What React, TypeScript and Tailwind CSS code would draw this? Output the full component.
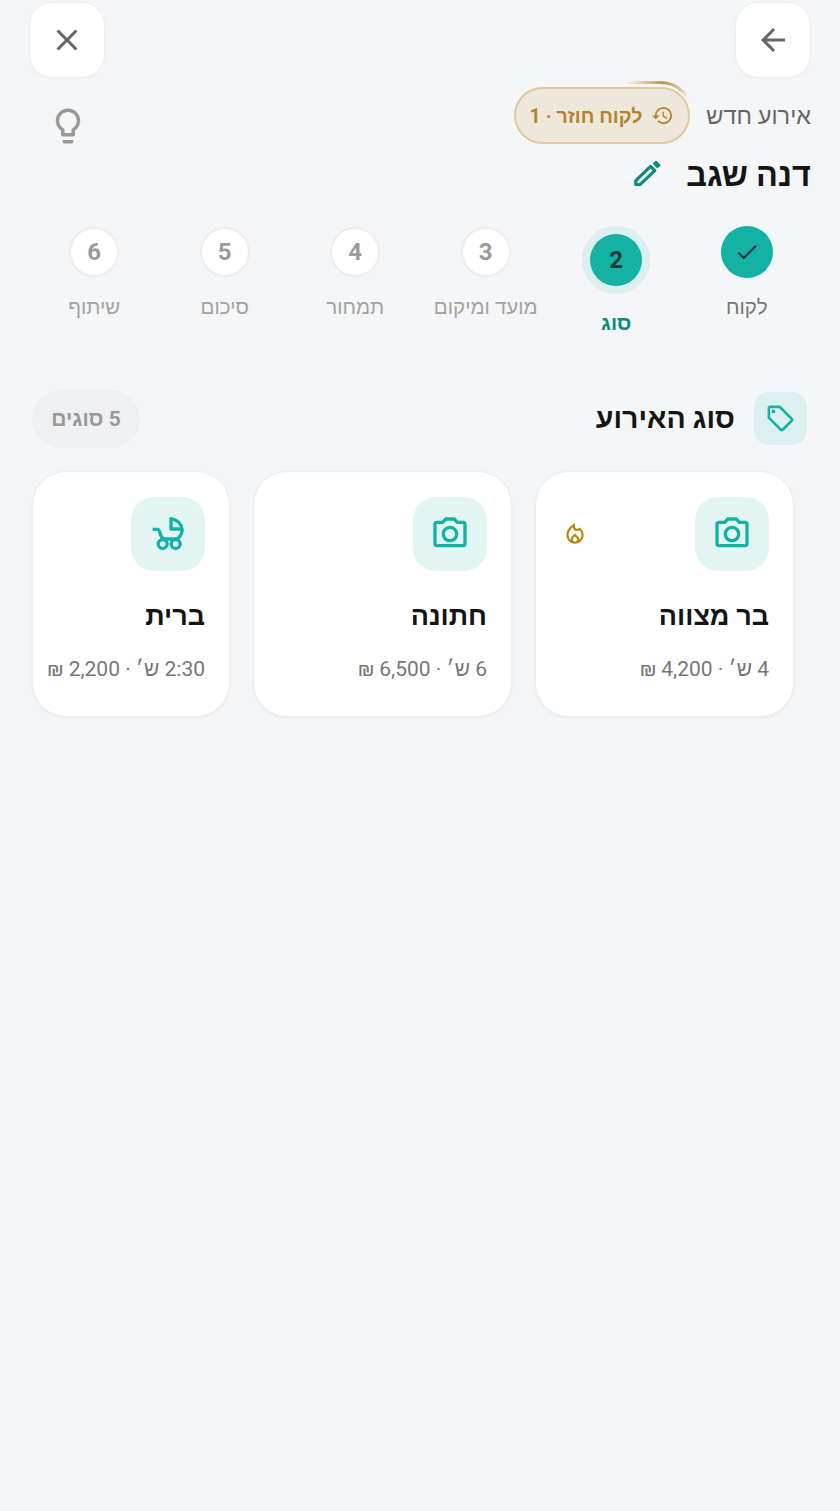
import React from "react";
import {
  MdArrowBack, MdClose, MdOutlineLightbulb, MdCheck, MdHistory,
  MdOutlineLocalOffer, MdOutlinePhotoCamera, MdOutlineLocalFireDepartment,
} from "react-icons/md";

const FONT = { fontFamily: 'Roboto, "Noto Sans", "Liberation Sans", sans-serif' };

function TopButton({ children }: { children: React.ReactNode }) {
  return (
    <button className="w-[76px] h-[76px] rounded-[23px] bg-white border border-[#eceef0] shadow-[0_1px_2px_rgba(0,0,0,0.03)] flex items-center justify-center text-[#666666]">
      {children}
    </button>
  );
}

function Stroller() {
  return (
    <svg width="40" height="40" viewBox="0 0 24 24" fill="none" stroke="currentColor" strokeWidth="2" strokeLinejoin="round" strokeLinecap="butt">
      <path d="M13.8 2.8 V9 H20.4 C20.2 6 17.6 3.4 13.8 2.8 Z" />
      <path d="M2.8 9.2 H5.6 C6.4 9.2 6.8 9.9 7 10.8 C7.5 13.2 8.4 14.4 9.6 15.2 M20.6 9.2 C20.4 11.4 19.4 13.6 17.4 15.2 M9 15 H17.8" />
      <circle cx="8.8" cy="18" r="2.7" />
      <circle cx="16.6" cy="18" r="2.7" />
    </svg>
  );
}

function Pencil() {
  return (
    <svg width="30" height="30" viewBox="0 0 30 30" fill="none" className="text-[#0f8a7e]">
      <path d="M3.8 24.4 V20.6 L18.6 6.4 L22.8 10.6 L8 24.6 Z" stroke="currentColor" strokeWidth="3.2" strokeLinejoin="round" />
      <path d="M21.2 3.6 L24 1 L28.4 5.2 L25.4 8 Z" fill="currentColor" stroke="currentColor" strokeWidth="1" strokeLinejoin="round" />
    </svg>
  );
}

const steps = [
  { n: 1, label: "לקוח", state: "done" },
  { n: 2, label: "סוג", state: "active" },
  { n: 3, label: "מועד ומיקום", state: "todo" },
  { n: 4, label: "תמחור", state: "todo" },
  { n: 5, label: "סיכום", state: "todo" },
  { n: 6, label: "שיתוף", state: "todo" },
];

function Step({ n, label, state }: { n: number; label: string; state: string }) {
  return (
    <div className="flex-1 flex flex-col items-center">
      {state === "done" && (
        <div className="w-[52px] h-[52px] rounded-full bg-[#14b2a4] flex items-center justify-center text-[#17393a]">
          <MdCheck size={26} />
        </div>
      )}
      {state === "active" && (
        <div className="w-[68px] h-[68px] rounded-full bg-[#dcf0ef] flex items-center justify-center">
          <div className="w-[52px] h-[52px] rounded-full bg-[#14b2a4] flex items-center justify-center text-[24px] font-bold text-[#12383a]">
            {n}
          </div>
        </div>
      )}
      {state === "todo" && (
        <div className="w-[50px] h-[50px] mt-[1px] rounded-full bg-white border-2 border-[#eeeeee] flex items-center justify-center text-[24px] font-bold text-[#9b9b9b]">
          {n}
        </div>
      )}
      <div
        className={
          state === "active"
            ? "mt-[15px] h-[28px] leading-[28px] text-[20.5px] font-bold text-[#0f8a7e] whitespace-nowrap"
            : state === "done"
              ? "mt-[15px] h-[28px] leading-[28px] text-[20.5px] text-[#777777] whitespace-nowrap"
              : "mt-[16px] h-[28px] leading-[28px] text-[20.5px] text-[#a3a3a3] whitespace-nowrap"
        }
      >
        {label}
      </div>
    </div>
  );
}

function Card({ w, icon, name, sub, fire, pl }: { w: string; icon: React.ReactNode; name: string; sub: string; fire?: boolean; pl: string }) {
  return (
    <div className={`${w} ${pl} h-[246px] shrink-0 rounded-[34px] bg-white border border-[#eceef0] shadow-[0_1px_3px_rgba(0,0,0,0.05)] pt-[25px] pr-[24px]`}>
      <div className="flex items-center justify-between h-[74px]">
        <div className="w-[74px] h-[74px] rounded-[23px] bg-[#e2f5f3] flex items-center justify-center text-[#14b2a4]">
          {icon}
        </div>
        {fire && <MdOutlineLocalFireDepartment size={26} className="text-[#b8860b] ml-[2px]" />}
      </div>
      <div className="mt-[27px] h-[36px] leading-[36px] text-[27px] font-bold text-[#151515] whitespace-nowrap">{name}</div>
      <div className="mt-[20px] h-[30px] leading-[30px] text-[21px] text-[#777777] whitespace-nowrap">{sub}</div>
    </div>
  );
}

function Camera() {
  return <MdOutlinePhotoCamera size={40} />;
}

export default function App() {
  return (
    <div dir="rtl" style={FONT} className="w-[840px] h-[1511px] bg-[#f4f6f8] overflow-hidden">
      <div className="flex justify-between pt-[2px] pr-[29px] pl-[29px]">
        <TopButton><MdArrowBack size={36} /></TopButton>
        <TopButton><MdClose size={36} /></TopButton>
      </div>

      <div className="flex items-center justify-between mt-[9px] pr-[29px] pl-[47px] h-[57px]">
        <div className="flex items-center gap-[16px]">
          <span className="w-[105px] text-[23.5px] font-medium text-[#666666] whitespace-nowrap pt-[2px]">אירוע חדש</span>
          <div className="relative">
            <div className="w-[176px] h-[57px] rounded-full bg-[#eee8dc] border-2 border-[#e0c99f] flex items-center justify-center gap-[9px] text-[#b4842c]">
              <MdHistory size={23} />
              <span className="text-[19.5px] font-bold whitespace-nowrap pt-[2px]">לקוח חוזר · 1</span>
            </div>
            <svg className="absolute -top-[7px] right-[-5px]" width="72" height="38" viewBox="0 0 72 38" fill="none">
              <defs>
                <linearGradient id="shine" x1="0" y1="0" x2="1" y2="0.5">
                  <stop offset="0" stopColor="#c9a45f" stopOpacity="0" />
                  <stop offset="0.45" stopColor="#b98c3c" stopOpacity="0.95" />
                  <stop offset="0.8" stopColor="#d9c49a" stopOpacity="0.7" />
                  <stop offset="1" stopColor="#ffffff" stopOpacity="0" />
                </linearGradient>
              </defs>
              <path d="M2 2.5 H37 A33 33 0 0 1 70 36" stroke="url(#shine)" strokeWidth="3" strokeLinecap="round" />
            </svg>
          </div>
        </div>
        <MdOutlineLightbulb size={42} className="text-[#999999] mt-[20px]" />
      </div>

      <div className="flex items-center gap-[24px] pr-[29px] mt-[7px] h-[48px]">
        <span className="text-[32.5px] font-bold text-[#151515] whitespace-nowrap pt-[1px]">דנה שגב</span>
        <Pencil />
      </div>

      <div className="flex items-start pr-[28px] pl-[29px] mt-[27px] h-[110px]">
        {steps.map((s) => <Step key={s.n} {...s} />)}
      </div>

      <div className="flex items-center justify-between mt-[54px] pr-[33px] pl-[32px]">
        <div className="flex items-center gap-[19px]">
          <div className="w-[53px] h-[53px] mb-[1px] rounded-[15px] bg-[#dcf0ef] flex items-center justify-center text-[#14b2a4]">
            <MdOutlineLocalOffer size={31} />
          </div>
          <span className="text-[28.5px] font-bold text-[#151515] whitespace-nowrap pt-[1px]">סוג האירוע</span>
        </div>
        <div className="w-[108px] h-[58px] pt-[1px] rounded-full bg-[#eef0f2] flex items-center justify-center text-[21px] font-bold text-[#999999] whitespace-nowrap">
          5 סוגים
        </div>
      </div>

      <div className="flex gap-[23px] mt-[23px] pr-[46px]">
        <Card w="w-[259px]" pl="pl-[24px]" icon={<Camera />} name="בר מצווה" sub="4 ש׳ · 4,200 ₪" fire />
        <Card w="w-[259px]" pl="pl-[24px]" icon={<Camera />} name="חתונה" sub="6 ש׳ · 6,500 ₪" />
        <Card w="w-[198px]" pl="pl-[14px]" icon={<Stroller />} name="ברית" sub="2:30 ש׳ · 2,200 ₪" />
      </div>
    </div>
  );
}
